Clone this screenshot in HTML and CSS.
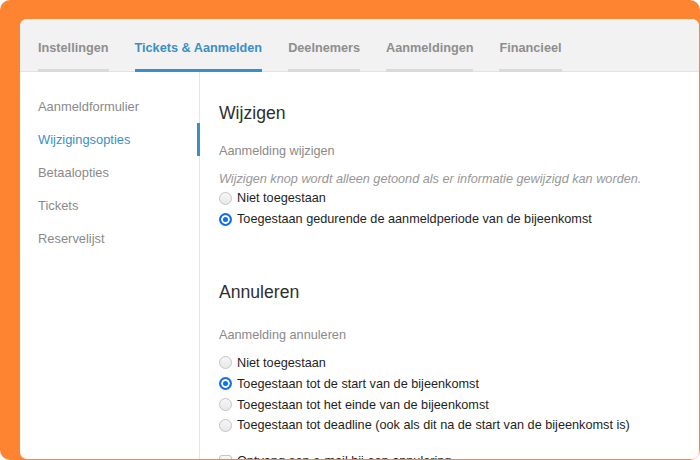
FILE: index.html
```html
<!DOCTYPE html>
<html lang="nl">
<head>
	<meta charset="UTF-8">
	<title>Tickets &amp; Aanmelden</title>
	<link rel="stylesheet" href="styles.css">
</head>
<body>
<div id="frame">
	<div id="card">
		<ul id="tabs">
			<li>Instellingen</li>
			<li class="active">Tickets &amp; Aanmelden</li>
			<li>Deelnemers</li>
			<li>Aanmeldingen</li>
			<li>Financieel</li>
		</ul>
		<div id="body">
			<ul id="side">
				<li>Aanmeldformulier</li>
				<li class="active">Wijzigingsopties</li>
				<li>Betaalopties</li>
				<li>Tickets</li>
				<li>Reservelijst</li>
			</ul>
			<div id="main">
				<h2>Wijzigen</h2>
				<p class="label">Aanmelding wijzigen</p>
				<p class="hint">Wijzigen knop wordt alleen getoond als er informatie gewijzigd kan worden.</p>
				<label class="opt"><input type="radio" name="wijzig">Niet toegestaan</label>
				<label class="opt"><input type="radio" name="wijzig" checked>Toegestaan gedurende de aanmeldperiode van de bijeenkomst</label>

				<h2 class="second">Annuleren</h2>
				<p class="label">Aanmelding annuleren</p>
				<label class="opt"><input type="radio" name="annul">Niet toegestaan</label>
				<label class="opt"><input type="radio" name="annul" checked>Toegestaan tot de start van de bijeenkomst</label>
				<label class="opt"><input type="radio" name="annul">Toegestaan tot het einde van de bijeenkomst</label>
				<label class="opt"><input type="radio" name="annul">Toegestaan tot deadline (ook als dit na de start van de bijeenkomst is)</label>
				<label class="opt check"><input type="checkbox">Ontvang een e-mail bij een annulering</label>
			</div>
		</div>
	</div>
</div>
</body>
</html>
```

FILE: styles.css
```css
*{margin: 0;padding: 0;box-sizing: border-box;}
ul{list-style: none;}
body{
	background: #fff;
	font-family: "Liberation Sans", Arial, sans-serif;
	font-size: 12.7px;
}
#frame{
	width: 700px;
	height: 460px;
	background: #ff8432;
	border-radius: 10px;
	padding: 19px 1px 1px 20px;
	overflow: hidden;
}
#card{
	height: 440px;
	background: #fff;
	border-radius: 7px;
	overflow: hidden;
	display: flex;
	flex-direction: column;
}
#tabs{
	display: flex;
	gap: 26px;
	padding: 0 18px;
	background: #f2f2f2;
	border-bottom: 1px solid #e3e3e3;
}
#tabs li{
	font-weight: bold;
	color: #8e8e8e;
	line-height: 16px;
	padding: 21px 0 13px;
	border-bottom: 3px solid #dadada;
	margin-bottom: -1px;
}
#tabs li.active{
	color: #3a8fc8;
	border-bottom-color: #3a8fc8;
}
#body{
	flex: 1;
	display: flex;
}
#side{
	width: 180px;
	flex-shrink: 0;
	padding-top: 18px;
	border-right: 1px solid #e4e4e4;
}
#side li{
	height: 33px;
	line-height: 33px;
	padding-left: 18px;
	color: #8a8a8a;
	font-size: 12.9px;
}
#side li.active{
	color: #3a8fc8;
	border-right: 3px solid #3a8fc8;
	margin-right: -1px;
}
#main{
	flex: 1;
	padding: 30px 0 0 19px;
}
#main h2{
	font-weight: normal;
	font-size: 17.6px;
	line-height: 22px;
	color: #2e2e2e;
}
#main h2.second{
	margin-top: 51px;
}
.label{
	color: #8a8a8a;
	line-height: 16px;
	margin: 19px 0 12px;
}
h2.second + .label{
	margin: 24px 0 10px;
}
.hint{
	color: #979797;
	font-style: italic;
	line-height: 16px;
	margin: 3px 0 1px;
}
.opt{
	display: flex;
	align-items: center;
	height: 20.8px;
	color: #1e1e1e;
}
.opt input{
	appearance: none;
	width: 13px;
	height: 13px;
	margin-right: 5px;
	border: 1px solid #c4c4c4;
	border-radius: 50%;
	background: linear-gradient(#f6f6f6, #e8e8e8);
}
.opt input:checked{
	border: 2px solid #0f6ff2;
	background: #0f6ff2;
	box-shadow: inset 0 0 0 2px #fff;
}
.opt.check{
	margin-top: 15px;
}
.opt.check input{
	border-radius: 3px;
}
```
